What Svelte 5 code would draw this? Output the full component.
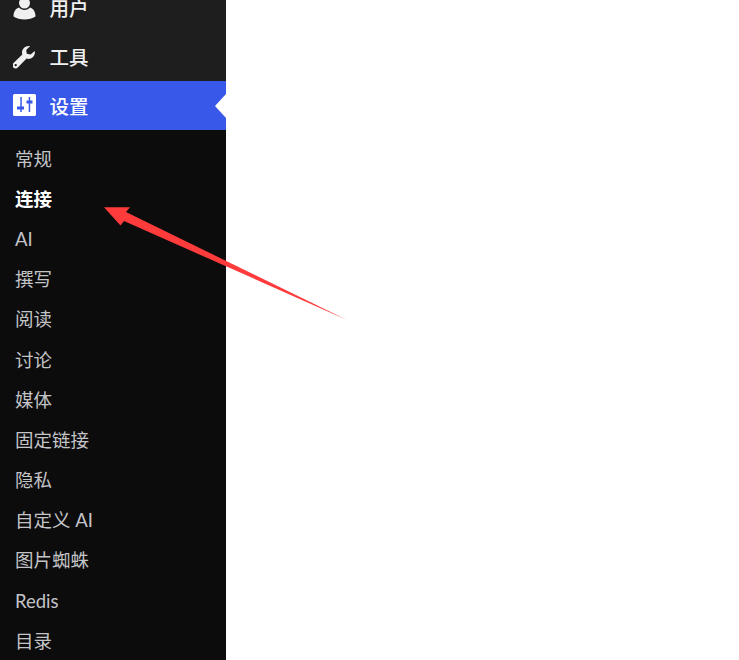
<script>
  const subItems = [
    { label: "常规" },
    { label: "连接", current: true },
    { label: "AI" },
    { label: "撰写" },
    { label: "阅读" },
    { label: "讨论" },
    { label: "媒体" },
    { label: "固定链接" },
    { label: "隐私" },
    { label: "自定义 AI" },
    { label: "图片蜘蛛" },
    { label: "Redis" },
    { label: "目录" }
  ];
</script>

<div class="page">
  <nav class="sidebar">
    <ul class="menu">
      <li class="item">
        <svg class="icon" viewBox="0 0 23 24">
          <circle cx="11.500" cy="7" r="5.500" />
          <path d="M.5 20.500c0-4.500 2-8 5.500-9 1.300 1.600 3.300 2.500 5.500 2.500s4.200-.9 5.500-2.500c3.500 1 5.500 4.500 5.500 9-2.800 2-7 3-11 3s-8.200-1-11-3z" />
        </svg>
        <span>用户</span>
      </li>
      <li class="item">
        <svg class="icon" viewBox="1 0 23 24">
          <path d="M22.800 6c.4 2.500-.4 4.800-2.100 6.300-1.800 1.500-4 2-6.100 1.300L5.800 22.600c-1.200 1.200-3.200 1.200-4.400 0-1.300-1.300-1.300-3.200-.1-4.400l9-8.800c-.7-2.200-.2-4.500 1.400-6.200C13.300 1.500 15.800.6 18.200 1.100l-4 4 .6 3.700 3.800.8zM3.700 18.900a1.200 1.200 0 1 0 0 2.400 1.200 1.200 0 0 0 0-2.400z" fill-rule="evenodd" />
        </svg>
        <span>工具</span>
      </li>
      <li class="item active">
        <svg class="icon" viewBox="0 0 23 24">
          <path d="M1.500 0h20A1.500 1.500 0 0 1 23 1.500v19a1.500 1.500 0 0 1-1.500 1.500h-20A1.500 1.500 0 0 1 0 20.500v-19A1.500 1.500 0 0 1 1.500 0zm5.800 3v9.500H4v3h3.300V18h1.500v-2.500H11v-3H8.800V3zm8.400 0v3.500h-2.200v3h2.200V18h1.500V9.500H19.500v-3h-2.300V3z" fill-rule="evenodd" />
        </svg>
        <span>设置</span>
      </li>
    </ul>
    <ul class="submenu">
      {#each subItems as sub}
        <li class:current={sub.current}>{sub.label}</li>
      {/each}
    </ul>
  </nav>

  <svg class="arrow" width="739" height="660" viewBox="0 0 739 660">
    <polygon points="104,207.300 130,207.300 126,212 347,320 124,221 120.500,225.500" />
  </svg>
</div>

<style>
  :global(body) {
    background: #fff;
    overflow: hidden;
  }

  .page {
    position: relative;
    height: 660px;
    overflow: hidden;
    font-family: Lato, "Noto Sans CJK SC", sans-serif;
  }

  ul {
    list-style: none;
    margin: 0;
    padding: 0;
  }

  .sidebar {
    display: flex;
    flex-direction: column;
    width: 226px;
    height: 100%;
    background: #0c0c0c;
  }

  .menu {
    margin-top: -17px;
    background: #1e1e1e;
  }

  .item {
    position: relative;
    display: flex;
    align-items: center;
    gap: 14px;
    height: 49px;
    padding-left: 13px;
    color: #f0f0f1;
    font-size: 19.500px;
    font-weight: 500;
  }

  .item span {
    margin-left: -0.500px;
  }

  .icon {
    width: 23px;
    height: 24px;
    fill: #f0f0f1;
    flex: none;
  }

  .item.active {
    background: #3858e9;
    color: #fff;
  }

  .item.active .icon {
    fill: #fff;
  }

  .item.active::after {
    content: "";
    position: absolute;
    right: 0;
    top: 50%;
    margin-top: -12px;
    border: 12px solid transparent;
    border-left-width: 0;
    border-right-width: 11px;
    border-right-color: #fff;
  }

  .submenu {
    padding-top: 8.800px;
  }

  .submenu li {
    height: 40.170px;
    line-height: 40.170px;
    padding-left: 15px;
    color: #c3c4c7;
    font-size: 18.500px;
  }

  .submenu li.current {
    color: #fff;
    font-weight: 700;
  }

  .arrow {
    position: absolute;
    left: 0;
    top: 0;
  }

  .arrow polygon {
    fill: #ff3b3b;
  }
</style>
